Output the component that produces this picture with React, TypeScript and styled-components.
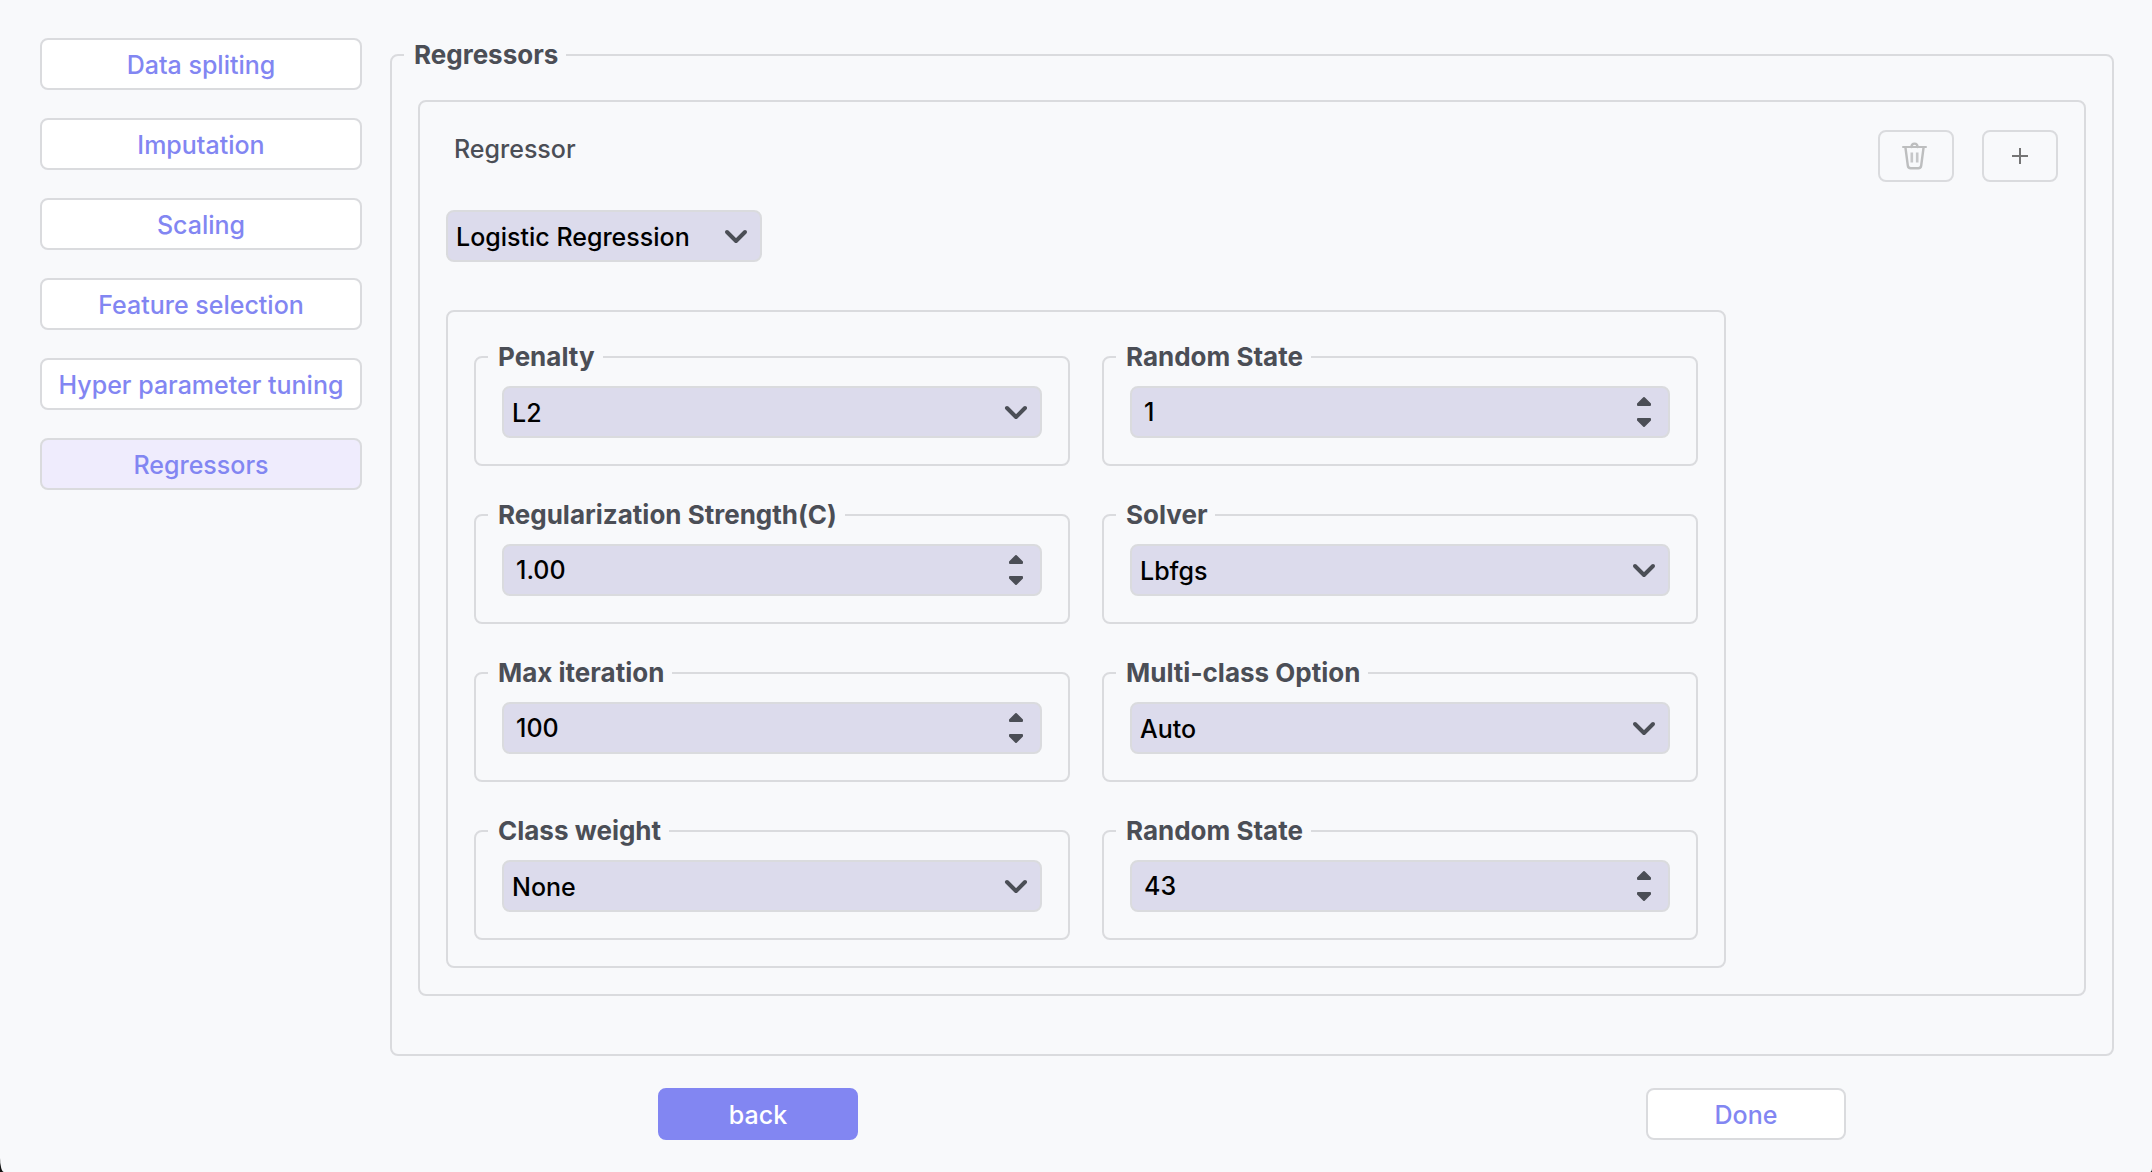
import React from "react";
import styled, { createGlobalStyle } from "styled-components";

const color = {
  page: "#f8f9fb",
  line: "#dadbde",
  text: "#4b4e56",
  accent: "#8286f2",
  accentSoft: "#efecfd",
  control: "#dcdbec",
};

const GlobalStyle = createGlobalStyle`
  *, *::before, *::after { box-sizing: border-box; }
  html { background: #111; }
  body {
    margin: 0;
    font-family: Inter, "Liberation Sans", sans-serif;
    font-size: 25px;
    font-weight: 500;
    line-height: 30px;
    color: ${color.text};
  }
  button, input, select { font: inherit; margin: 0; }
`;

const Page = styled.div`
  display: flex;
  align-items: flex-start;
  gap: 28px;
  min-height: 100vh;
  padding: 38px 38px 32px 40px;
  background: ${color.page};
  border-radius: 0 0 2px 4px / 0 0 4px 14px;
`;

const Steps = styled.nav`
  display: flex;
  flex-direction: column;
  flex: 0 0 322px;
  gap: 28px;
`;

const Button = styled.button<{ $variant?: "outline" | "active" | "solid" }>`
  height: 52px;
  padding: 2px 8px 0;
  border: 2px solid ${(p) => (p.$variant === "solid" ? color.accent : color.line)};
  border-radius: 8px;
  background: ${(p) =>
    p.$variant === "solid" ? color.accent : p.$variant === "active" ? color.accentSoft : "#fff"};
  color: ${(p) => (p.$variant === "solid" ? "#fff" : color.accent)};
  white-space: nowrap;
  cursor: pointer;
`;

const FooterButton = styled(Button)`
  width: 200px;
`;

const Main = styled.main`
  display: flex;
  flex-direction: column;
  flex: 1;
  gap: 32px;
  min-width: 0;
  padding-top: 2px;
`;

const Group = styled.fieldset`
  min-width: 0;
  margin: 0;
  padding: 14px 26px 26px;
  border: 2px solid ${color.line};
  border-radius: 8px;
`;

const Section = styled(Group)`
  padding-top: 30px;
  padding-bottom: 58px;
`;

const Legend = styled.legend`
  margin-left: -14px;
  padding: 0 8px 0 10px;
  font-size: 26px;
  font-weight: 700;
`;

const Card = styled.section`
  padding: 28px 26px 26px;
  border: 2px solid ${color.line};
  border-radius: 8px;
`;

const CardHead = styled.div`
  display: flex;
  align-items: flex-start;
  justify-content: space-between;
  margin-bottom: 28px;
`;

const CardLabel = styled.label`
  padding: 4px 8px;
`;

const Actions = styled.div`
  display: flex;
  gap: 28px;
`;

const IconButton = styled.button`
  display: flex;
  align-items: center;
  justify-content: center;
  width: 76px;
  height: 52px;
  padding: 0;
  border: 2px solid ${color.line};
  border-radius: 8px;
  background: transparent;
  color: #757575;
  cursor: pointer;

  &:disabled {
    color: #bdbebf;
    cursor: default;
  }
`;

const Params = styled.div`
  display: grid;
  grid-template-columns: repeat(2, minmax(0, 1fr));
  gap: 34px 32px;
  max-width: 1280px;
  margin-top: 48px;
  padding: 30px 26px 26px;
  border: 2px solid ${color.line};
  border-radius: 8px;
`;

const Control = styled.div<{ $width?: string }>`
  position: relative;
  display: flex;
  width: ${(p) => p.$width ?? "100%"};
  height: 52px;
  border: 2px solid ${color.line};
  border-radius: 8px;
  background: ${color.control};
  overflow: hidden;
`;

const SelectBox = styled.select`
  appearance: none;
  flex: 1;
  min-width: 0;
  padding: 2px 48px 0 8px;
  border: 0;
  background: transparent;
  color: #000;
`;

const Chevron = styled.svg`
  position: absolute;
  top: 17px;
  right: 12px;
  color: ${color.text};
  pointer-events: none;
`;

const NumberBox = styled.input`
  appearance: textfield;
  flex: 1;
  min-width: 0;
  padding: 0 12px;
  border: 0;
  background: transparent;
  color: #000;

  &::-webkit-inner-spin-button,
  &::-webkit-outer-spin-button {
    appearance: none;
    margin: 0;
  }
`;

const Spinner = styled.div`
  display: flex;
  flex-direction: column;
  width: 48px;
  padding: 2px 0;
`;

const SpinButton = styled.button`
  display: flex;
  flex: 1;
  align-items: center;
  justify-content: center;
  padding: 0;
  border: 0;
  background: transparent;
  color: ${color.text};
  cursor: pointer;
`;

const Footer = styled.footer`
  display: flex;
  justify-content: space-between;
  width: 100%;
  max-width: 1188px;
  margin: 0 auto;
`;

const TrashIcon = () => (
  <svg width="28" height="28" viewBox="0 0 28 28" fill="none" stroke="currentColor" strokeWidth="2" strokeLinecap="round" aria-hidden="true">
    <path d="M1 5h23" />
    <path d="M9.500 5c0-4.500 6-4.500 6 0" strokeWidth="2.400" />
    <path d="M3.500 6l2.300 17.500q.3 2.700 2.900 2.700h7.600q2.600 0 2.900-2.700L21.500 6" strokeWidth="2.400" />
    <path d="M9.800 10.500v10M15.200 10.500v10" strokeWidth="2.600" strokeLinecap="butt" opacity=".85" />
  </svg>
);

const PlusIcon = () => (
  <svg width="18" height="18" viewBox="0 0 18 18" fill="none" stroke="currentColor" strokeWidth="2" aria-hidden="true">
    <path d="M1 9h16M9 1v16" />
  </svg>
);

const Triangle = ({ down = false }: { down?: boolean }) => (
  <svg width="16" height="10" viewBox="0 0 16 10" fill="currentColor" stroke="currentColor" strokeWidth="2" strokeLinejoin="round" aria-hidden="true">
    <path d={down ? "M2 1v1l6 6 6-6v-1z" : "M2 9v-1l6-6 6 6v1z"} />
  </svg>
);

type SelectProps = { id: string; value: string; width?: string };

const Select = ({ id, value, width }: SelectProps) => (
  <Control $width={width}>
    <SelectBox id={id} defaultValue={value}>
      <option>{value}</option>
    </SelectBox>
    <Chevron width="24" height="16" viewBox="0 0 24 16" fill="none" stroke="currentColor" strokeWidth="4" strokeLinecap="round" strokeLinejoin="round" aria-hidden="true">
      <path d="M3 3l9 9 9-9" />
    </Chevron>
  </Control>
);

const NumberInput = ({ id, value }: { id: string; value: string }) => {
  const ref = React.useRef<HTMLInputElement>(null);
  return (
    <Control>
      <NumberBox ref={ref} id={id} type="number" step={value.includes(".") ? "0.01" : "1"} defaultValue={value} />
      <Spinner>
        <SpinButton type="button" aria-label="Increase" onClick={() => ref.current?.stepUp()}>
          <Triangle />
        </SpinButton>
        <SpinButton type="button" aria-label="Decrease" onClick={() => ref.current?.stepDown()}>
          <Triangle down />
        </SpinButton>
      </Spinner>
    </Control>
  );
};

const steps = [
  "Data spliting",
  "Imputation",
  "Scaling",
  "Feature selection",
  "Hyper parameter tuning",
  "Regressors",
];

const params: { id: string; label: string; kind: "select" | "number"; value: string }[] = [
  { id: "penalty", label: "Penalty", kind: "select", value: "L2" },
  { id: "state", label: "Random State", kind: "number", value: "1" },
  { id: "strength", label: "Regularization Strength(C)", kind: "number", value: "1.00" },
  { id: "solver", label: "Solver", kind: "select", value: "Lbfgs" },
  { id: "iterations", label: "Max iteration", kind: "number", value: "100" },
  { id: "multiclass", label: "Multi-class Option", kind: "select", value: "Auto" },
  { id: "weight", label: "Class weight", kind: "select", value: "None" },
  { id: "seed", label: "Random State", kind: "number", value: "43" },
];

export default function App() {
  return (
    <>
      <GlobalStyle />
      <Page>
        <Steps>
          {steps.map((step) => (
            <Button key={step} type="button" $variant={step === "Regressors" ? "active" : "outline"}>
              {step}
            </Button>
          ))}
        </Steps>
        <Main>
          <Section>
            <Legend>Regressors</Legend>
            <Card>
              <CardHead>
                <CardLabel htmlFor="regressor">Regressor</CardLabel>
                <Actions>
                  <IconButton type="button" aria-label="Delete regressor" disabled>
                    <TrashIcon />
                  </IconButton>
                  <IconButton type="button" aria-label="Add regressor">
                    <PlusIcon />
                  </IconButton>
                </Actions>
              </CardHead>
              <Select id="regressor" value="Logistic Regression" width="316px" />
              <Params>
                {params.map(({ id, label, kind, value }) => (
                  <Group key={id}>
                    <Legend>
                      <label htmlFor={id}>{label}</label>
                    </Legend>
                    {kind === "select" ? <Select id={id} value={value} /> : <NumberInput id={id} value={value} />}
                  </Group>
                ))}
              </Params>
            </Card>
          </Section>
          <Footer>
            <FooterButton type="button" $variant="solid">
              back
            </FooterButton>
            <FooterButton type="button">Done</FooterButton>
          </Footer>
        </Main>
      </Page>
    </>
  );
}
